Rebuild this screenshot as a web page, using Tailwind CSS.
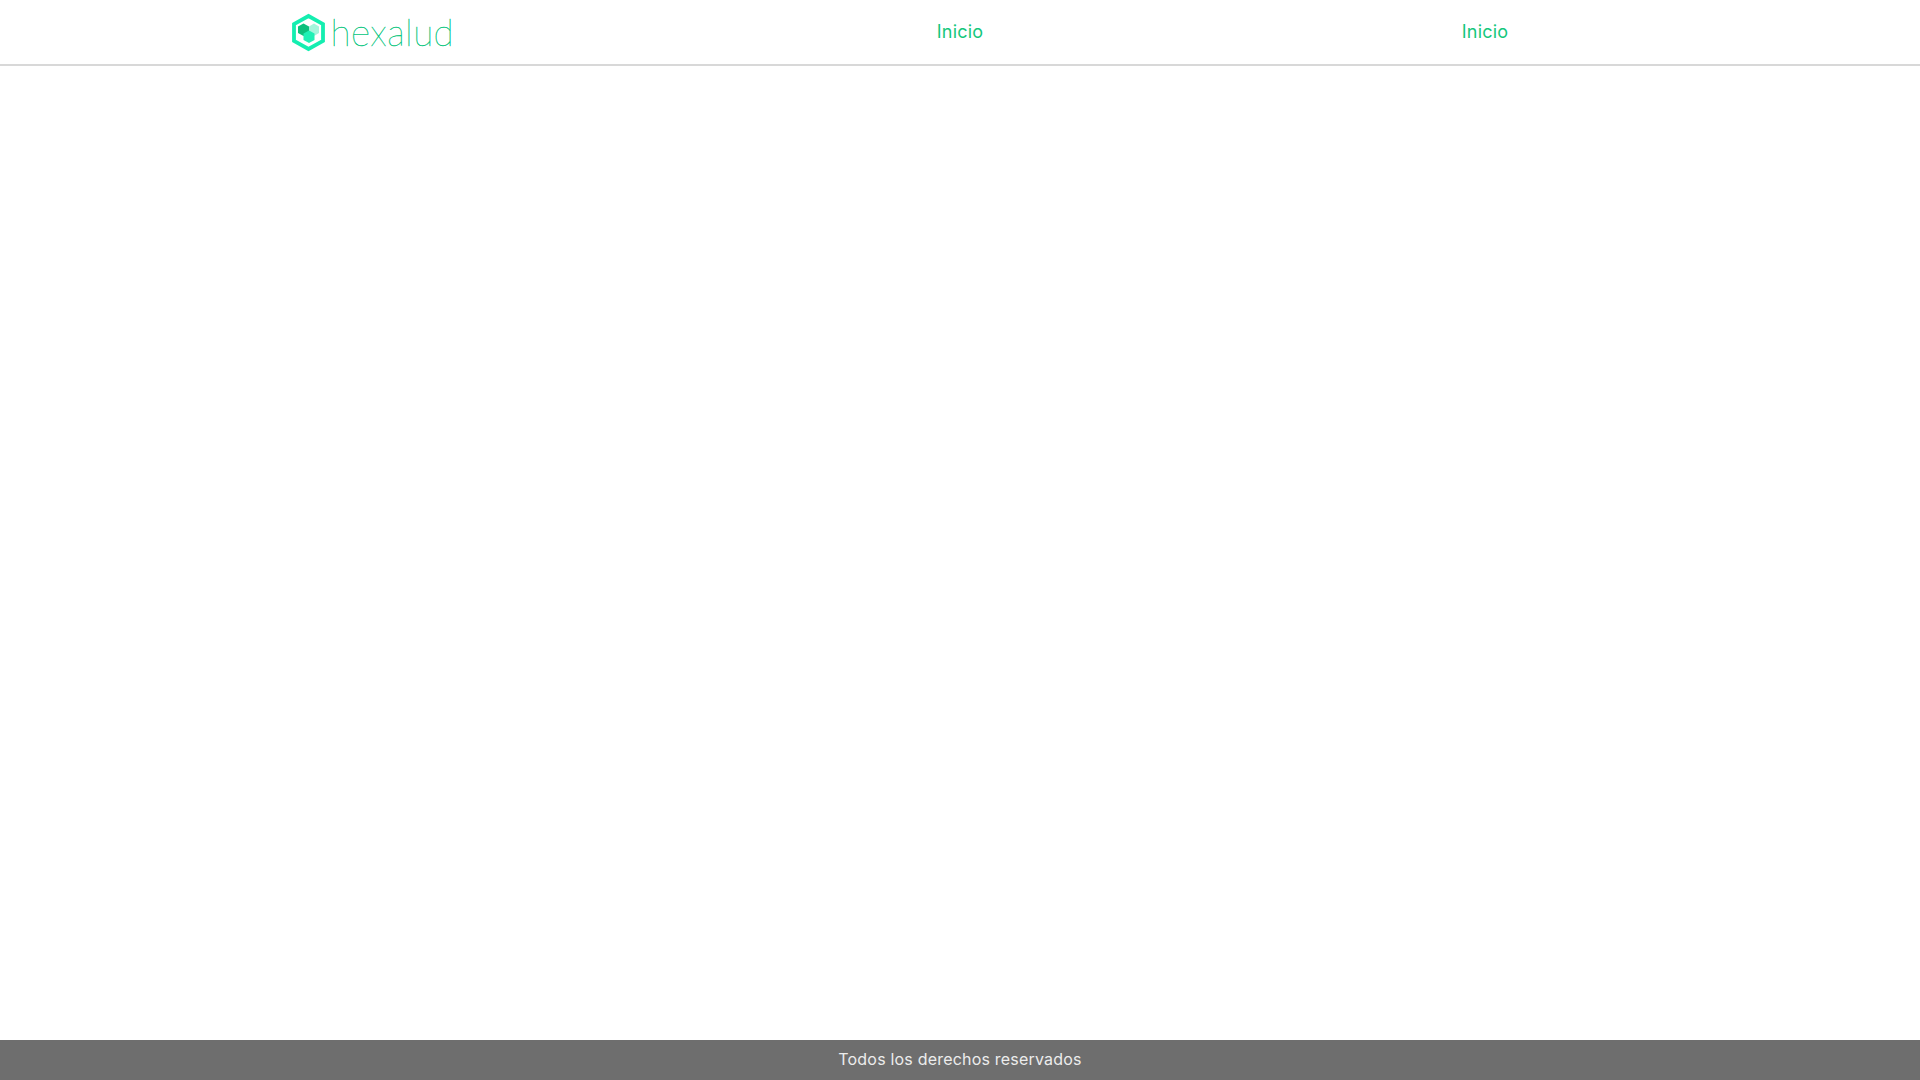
<!DOCTYPE html>
<html lang="es">
<head>
  <meta charset="UTF-8" />
  <meta name="viewport" content="width=device-width, initial-scale=1.0" />
  <title>Hexalud</title>
  <script src="https://cdn.jsdelivr.net/npm/@tailwindcss/browser@4"></script>
</head>
<body class="bg-white font-['Inter',sans-serif] flex flex-col h-screen overflow-hidden">

  <!-- Navbar -->
  <nav class="h-[66px] border-b-2 border-[#d8d8d8] bg-white shrink-0">
    <div class="w-[1575px] h-16 mx-auto grid grid-cols-3 items-center text-center">
      <a href="#" class="flex items-center gap-[5px] pl-[118px]">
        <svg class="w-[35px] h-[39px] shrink-0" viewBox="0 0 35 38">
          <path d="M17.5 2.5 L32 10.5 V27.5 L17.5 35.5 L3 27.5 V10.5 Z" fill="none" stroke="#14eeb0" stroke-width="3.8" />
          <path d="M12.5 10 L18 13 V19.5 L12.5 22.5 L7 19.5 V13 Z" fill="#0cc07c" />
          <path d="M23 10 L28 13 V19.5 L23 22.5 L18 19.5 V13 Z" fill="#a5f5dc" />
          <path d="M18 17 L23.5 20 V26.5 L18 29.5 L12.5 26.5 V20 Z" fill="#1ff0b5" />
        </svg>
        <span class="text-[37px] leading-none font-thin text-[#00c47a] tracking-[0.4px] [-webkit-text-stroke:0.35px_#00c47a] mb-px font-['Lato','Inter',sans-serif]">hexalud</span>
      </a>
      <a href="#" class="text-lg tracking-[0.2px] text-[#14c77c]">Inicio</a>
      <a href="#" class="text-lg tracking-[0.2px] text-[#14c77c]">Inicio</a>
    </div>
  </nav>

  <main class="flex-1"></main>

  <!-- Footer -->
  <footer class="h-10 shrink-0 bg-[#6e6e6e] text-[#ececec] text-base tracking-[0.2px] flex items-center justify-center pb-[3px]">
    Todos los derechos reservados
  </footer>

</body>
</html>
